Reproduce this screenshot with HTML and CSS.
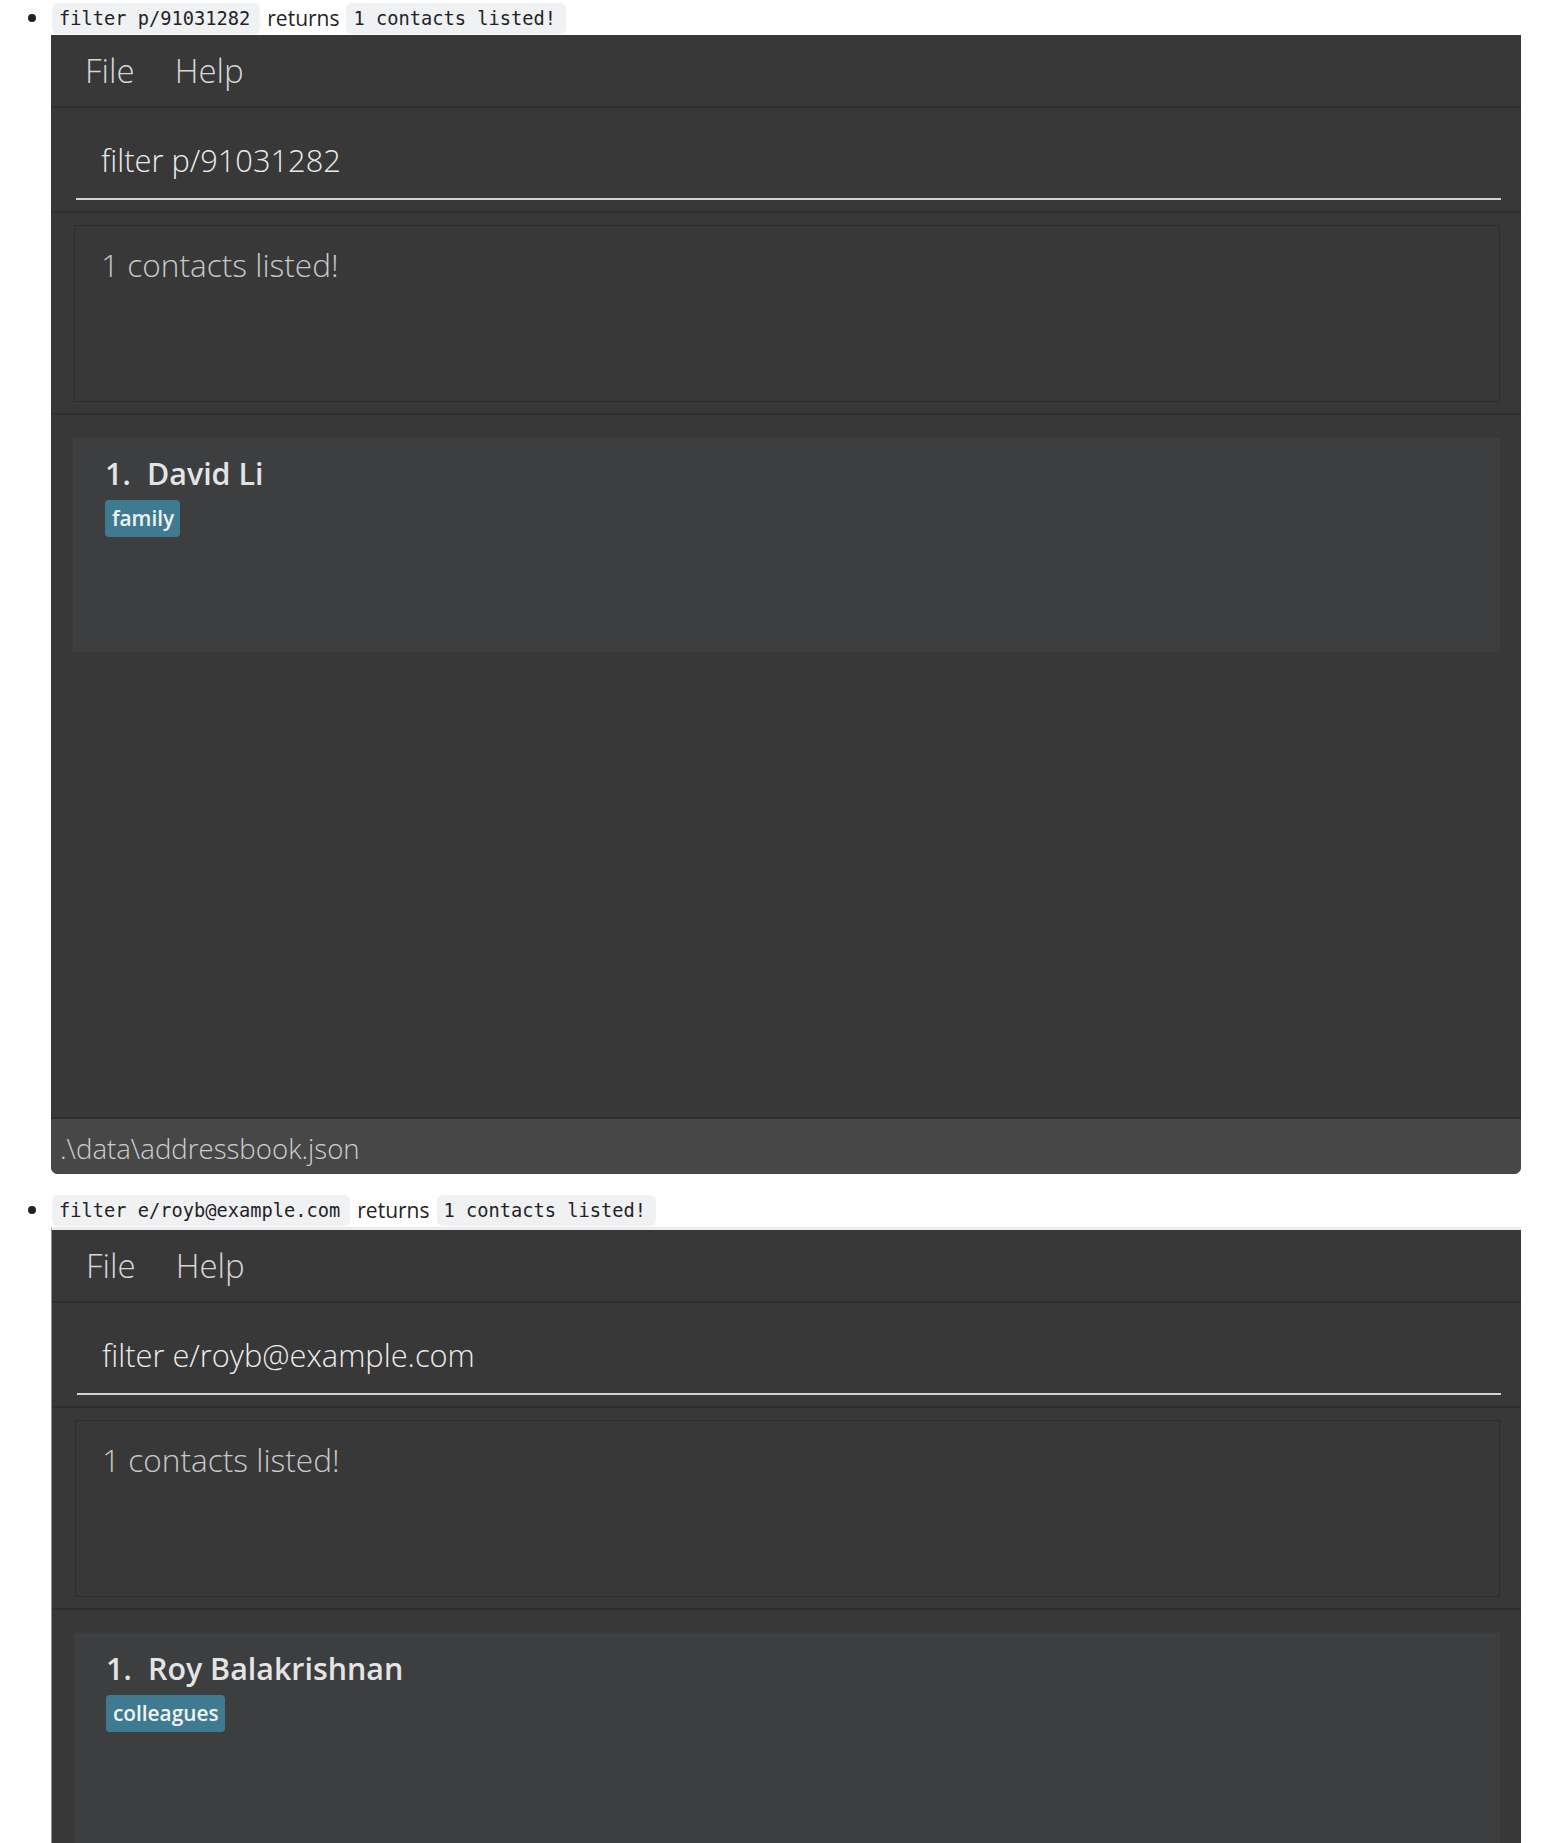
FILE: index.html
```html
<!DOCTYPE html>
<html lang="en">
<head>
<meta charset="utf-8">
<title>filter examples</title>
<link rel="stylesheet" href="styles.css">
</head>
<body>
<div class="page">
  <ul class="steps">
    <li class="step">
      <span class="bullet"></span>
      <div class="step-body">
        <p class="caption"><code class="chip">filter p/91031282</code><span class="word">returns</span><code class="chip">1 contacts listed!</code></p>
        <div class="app">
          <nav class="menubar"><span class="menu-item">File</span><span class="menu-item">Help</span></nav>
          <section class="command"><div class="command-field">filter p/91031282</div></section>
          <section class="result"><div class="result-box">1 contacts listed!</div></section>
          <section class="list">
            <article class="card">
              <div class="card-title"><span class="idx">1.</span><span class="name">David Li</span></div>
              <div class="tags"><span class="tag">family</span></div>
            </article>
          </section>
          <footer class="status">.\data\addressbook.json</footer>
        </div>
      </div>
    </li>
    <li class="step">
      <span class="bullet"></span>
      <div class="step-body">
        <p class="caption"><code class="chip">filter e/royb@example.com</code><span class="word">returns</span><code class="chip">1 contacts listed!</code></p>
        <div class="app app-framed">
          <nav class="menubar"><span class="menu-item">File</span><span class="menu-item">Help</span></nav>
          <section class="command"><div class="command-field">filter e/royb@example.com</div></section>
          <section class="result"><div class="result-box">1 contacts listed!</div></section>
          <section class="list">
            <article class="card">
              <div class="card-title"><span class="idx">1.</span><span class="name">Roy Balakrishnan</span></div>
              <div class="tags"><span class="tag">colleagues</span></div>
            </article>
          </section>
        </div>
      </div>
    </li>
  </ul>
</div>
</body>
</html>
```

FILE: styles.css
```css
* { box-sizing: border-box; }

html, body {
  margin: 0;
  padding: 0;
  background: #ffffff;
}

.page {
  height: 1843px;
  overflow: hidden;
  font-family: "Open Sans", "Noto Sans", sans-serif;
  color: #1f2328;
}

.steps {
  list-style: none;
  margin: 0;
  padding: 0;
}

.step {
  display: grid;
  grid-template-columns: 51px 1470px;
}

.step + .step {
  margin-top: 18px;
}

.bullet {
  width: 8px;
  height: 8px;
  margin: 14px 0 0 28px;
  border-radius: 50%;
  background: #1f2328;
}

.caption {
  display: flex;
  align-items: center;
  gap: 7px;
  height: 31px;
  margin: 3px 0 0 1px;
  font-size: 21px;
  line-height: 31px;
}

.chip {
  display: inline-block;
  height: 31px;
  padding: 1px 10px 0 7px;
  border-radius: 6px;
  background: #eff1f3;
  font-family: "DejaVu Sans Mono", "Liberation Mono", monospace;
  font-size: 18.7px;
  line-height: 30px;
  color: #1f2328;
}

.word {
  color: #1f2328;
}

.app {
  margin-top: 1px;
  background: #383838;
  border-radius: 0 0 7px 7px;
  overflow: hidden;
  font-family: "Open Sans", "Noto Sans", sans-serif;
}

.app-framed {
  height: 700px;
  margin-top: 1px;
  border-top: 3px solid #ececec;
  border-left: 1px solid #8a8a8a;
}

.menubar {
  display: flex;
  gap: 40px;
  height: 73px;
  padding-left: 34px;
  border-bottom: 2px solid #2e2e2e;
  font-size: 33px;
  font-weight: 300;
  line-height: 71px;
  color: #d6d6d6;
}

.command {
  padding: 11px 20px 11px 25px;
}

.command-field {
  padding: 21px 0 18px 25px;
  border-bottom: 2px solid #d2d2d2;
  font-size: 30.8px;
  font-weight: 300;
  line-height: 40px;
  color: #ececec;
}

.result {
  padding: 12px 21px 11px 23px;
  border-top: 2px solid #2e2e2e;
}

.result-box {
  height: 177px;
  padding: 19px 0 0 26px;
  border: 1px solid #2c2c2c;
  font-size: 31.6px;
  font-weight: 300;
  line-height: 40px;
  color: #c8c8c8;
}

.list {
  height: 704px;
  padding: 23px 21px 0 22px;
  border-top: 2px solid #2e2e2e;
}

.card {
  min-height: 214px;
  padding: 16px 0 0 32px;
  background: #3c3e3f;
}

.card-title {
  display: flex;
  font-size: 30.4px;
  font-weight: 600;
  line-height: 40px;
  color: #e4e4e4;
}

.idx {
  width: 42px;
}

.tags {
  display: flex;
  margin-top: 6px;
}

.tag {
  padding: 5px 6px 5px 7px;
  border-radius: 4px;
  background: #3e7b91;
  font-size: 20.8px;
  font-weight: 600;
  line-height: 27px;
  color: #f2f2f2;
}

.status {
  height: 57px;
  padding: 3px 0 0 9px;
  border-top: 2px solid #2e2e2e;
  background: #474747;
  font-size: 27.6px;
  font-weight: 300;
  line-height: 52px;
  color: #cfcfcf;
}
```
